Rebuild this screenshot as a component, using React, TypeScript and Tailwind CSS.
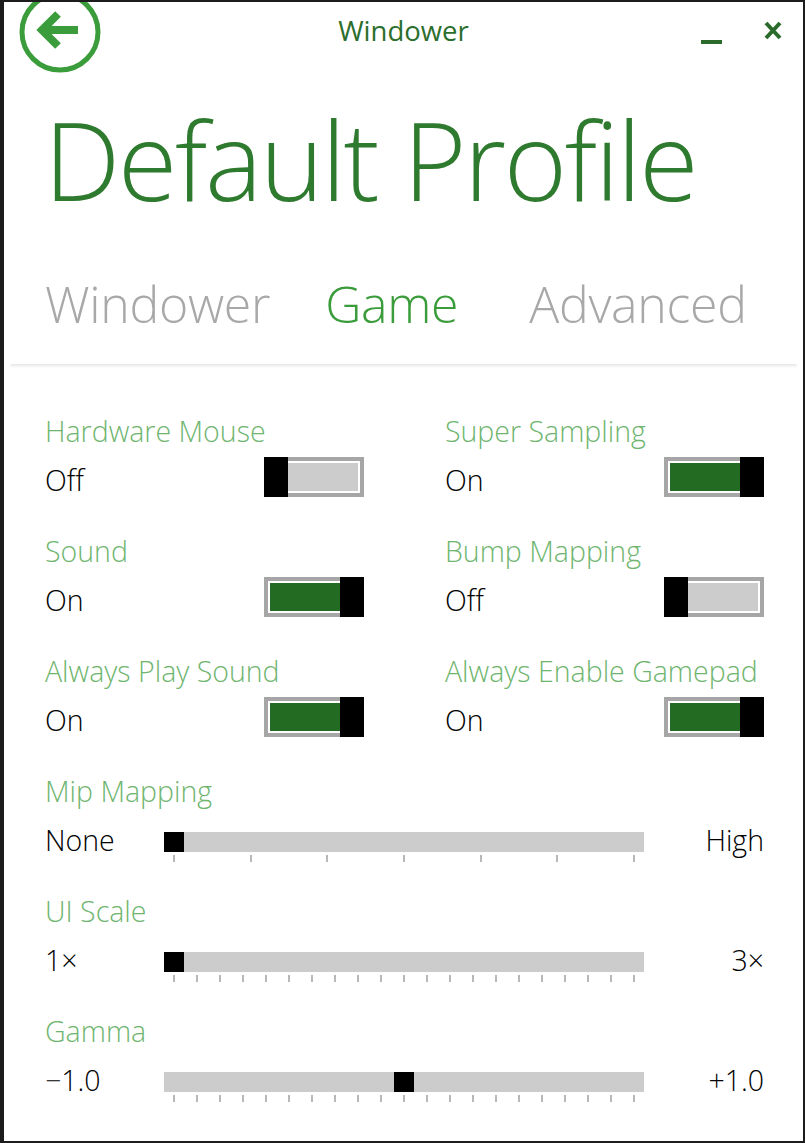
import React from "react";

const font = { fontFamily: '"Open Sans", "Noto Sans", sans-serif' };

function Toggle({ on }: { on: boolean }) {
  return (
    <div className="relative w-[100px] h-[40px] border-[4px] border-[#a6a6a6] bg-white p-[2px] flex">
      {on ? (
        <>
          <div className="flex-1 bg-[#236b23]" />
          <div className="w-[24px] -my-[6px] -mr-[6px] bg-black" />
        </>
      ) : (
        <>
          <div className="w-[24px] -my-[6px] -ml-[6px] bg-black" />
          <div className="flex-1 bg-[#cccccc]" />
        </>
      )}
    </div>
  );
}

function ToggleSetting({ label, on }: { label: string; on: boolean }) {
  return (
    <div className="flex flex-col w-[319px]">
      <div className="text-[28.5px] leading-[34px] text-[#6fb56f] font-light">{label}</div>
      <div className="flex items-center justify-between mt-[9px]">
        <span className="text-[28.5px] leading-[34px] mt-[6px] text-black font-light">{on ? "On" : "Off"}</span>
        <Toggle on={on} />
      </div>
    </div>
  );
}

function Slider({
  label,
  left,
  right,
  pos,
  ticks,
  className,
}: {
  label: string;
  left: string;
  right: string;
  pos: number;
  ticks: number;
  className?: string;
}) {
  const arr = Array.from({ length: ticks }, (_, i) => i);
  return (
    <div className={"flex flex-col " + (className ?? "")}>
      <div className="text-[28.5px] leading-[34px] text-[#6fb56f] font-light">{label}</div>
      <div className="flex items-start mt-[24px]">
        <span className="w-[119px] text-[28.5px] leading-[30px] -mt-[7px] text-black font-light">{left}</span>
        <div className="w-[480px] flex flex-col">
          <div className="h-[20px] bg-[#cccccc] relative">
            <div className="absolute top-0 h-[20px] w-[20px] bg-black" style={{ left: pos }} />
          </div>
          <div className="flex justify-between px-[9px] mt-[3px]">
            {arr.map((i) => (
              <div key={i} className="w-[2px] h-[7px] bg-[#b8b8b8]" />
            ))}
          </div>
        </div>
        <span className="flex-1 text-right text-[28.5px] leading-[30px] -mt-[7px] text-black font-light">{right}</span>
      </div>
    </div>
  );
}

export default function App() {
  return (
    <div className="w-[805px] h-[1143px] bg-[#1c1c1c] pt-[2px] pl-[4px] pr-[2px] pb-[2px]" style={font}>
      <div className="bg-white w-full h-full relative overflow-hidden">
        {/* header */}
        <div className="h-[62px] flex items-center relative">
          <svg
            className="absolute left-[14px] -top-[14px]"
            width="88"
            height="88"
            viewBox="0 0 88 88"
          >
            <circle cx="42" cy="44" r="38" fill="none" stroke="#3a9c3a" strokeWidth="5" />
            <path d="M40 26 L24 42 L40 58 M25 42 L60 42" fill="none" stroke="#3a9c3a" strokeWidth="8" strokeLinejoin="miter" />
          </svg>
          <div className="flex-1 text-center text-[27.5px] text-[#2c6e2c] -mt-[4px]">Windower</div>
          <div className="absolute right-[21px] top-[12px] flex items-center gap-[42px]">
            <div className="w-[21px] h-[4px] bg-[#2a6a2a] mt-[26px]" />
            <svg width="18" height="19" viewBox="0 0 18 19" className="mt-[2px]">
              <path d="M2 2 L16 17 M16 2 L2 17" stroke="#2a6a2a" strokeWidth="4" />
            </svg>
          </div>
        </div>

        {/* big title */}
        <div className="pl-[40px] mt-[26px] text-[108px] leading-[140px] text-[#2e7a2e] font-light tracking-[-2.3px]">
          Default Profile
        </div>

        {/* tabs */}
        <div className="flex items-baseline pl-[41px] mt-[39px] text-[50px] leading-[70px] font-light tracking-[-0.3px]">
          <span className="text-[#a8a8a8]">Windower</span>
          <span className="text-[#3a9c3a] ml-[55px]">Game</span>
          <span className="text-[#a8a8a8] ml-[71px]">Advanced</span>
        </div>
        <div className="mt-[25px] mx-[6px] h-[4px] bg-gradient-to-b from-[#e6e6e6] to-white rounded-full" />

        {/* settings */}
        <div className="pl-[41px] pr-[39px] mt-[46px] flex flex-col">
          <div className="flex justify-between">
            <ToggleSetting label="Hardware Mouse" on={false} />
            <ToggleSetting label="Super Sampling" on={true} />
          </div>
          <div className="flex justify-between mt-[37px]">
            <ToggleSetting label="Sound" on={true} />
            <ToggleSetting label="Bump Mapping" on={false} />
          </div>
          <div className="flex justify-between mt-[37px]">
            <ToggleSetting label="Always Play Sound" on={true} />
            <ToggleSetting label="Always Enable Gamepad" on={true} />
          </div>
          <Slider className="mt-[37px]" label="Mip Mapping" left="None" right="High" pos={0} ticks={7} />
          <Slider className="mt-[32px]" label="UI Scale" left="1×" right="3×" pos={0} ticks={21} />
          <Slider className="mt-[32px]" label="Gamma" left="−1.0" right="+1.0" pos={230} ticks={21} />
        </div>
      </div>
    </div>
  );
}
